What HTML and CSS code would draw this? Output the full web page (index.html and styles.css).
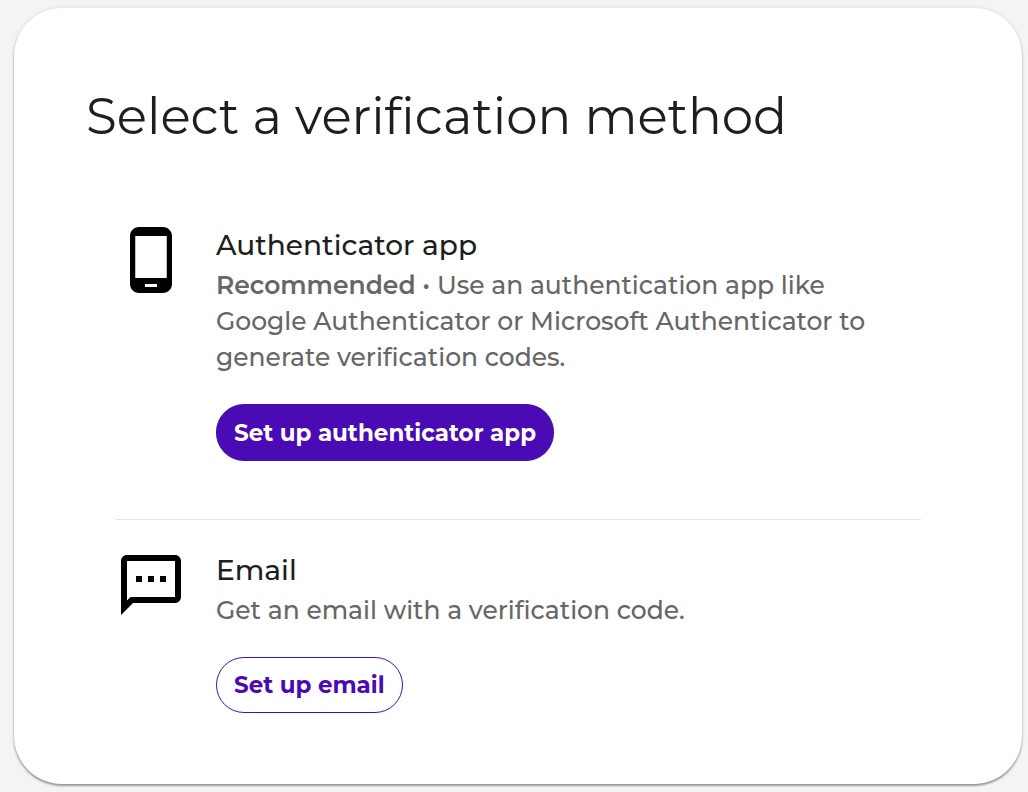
FILE: index.html
```html
<!DOCTYPE html>
<html lang="en">
<head>
<meta charset="utf-8">
<meta name="viewport" content="width=device-width, initial-scale=1">
<title>Select a verification method</title>
<link rel="stylesheet" href="styles.css">
</head>
<body>
<main class="card">
  <h1 class="title">Select a verification method</h1>
  <ul class="methods">
    <li class="method">
      <svg class="method-icon" viewBox="0 0 24 24" aria-hidden="true"><path d="M16 1H8C6.34 1 5 2.34 5 4v16c0 1.66 1.34 3 3 3h8c1.66 0 3-1.34 3-3V4c0-1.66-1.34-3-3-3zm-2 20h-4v-1h4v1zm3.25-3H6.75V4h10.5v14z"/></svg>
      <div class="method-body">
        <h2 class="method-name">Authenticator app</h2>
        <p class="method-text"><strong class="tag">Recommended</strong> • Use an authentication app like Google Authenticator or Microsoft Authenticator to generate verification codes.</p>
        <button class="button button-primary" type="button">Set up authenticator app</button>
      </div>
    </li>
    <li class="method">
      <svg class="method-icon" viewBox="0 0 24 24" aria-hidden="true"><path d="M20 2H4c-1.100 0-2 .9-2 2v18l4-4h14c1.100 0 2-.9 2-2V4c0-1.100-.9-2-2-2zm0 14H5.170L4 17.170V4h16v12zM7 9h2v2H7zm4 0h2v2h-2zm4 0h2v2h-2z"/></svg>
      <div class="method-body">
        <h2 class="method-name">Email</h2>
        <p class="method-text">Get an email with a verification code.</p>
        <button class="button button-outline" type="button">Set up email</button>
      </div>
    </li>
  </ul>
</main>
</body>
</html>
```
FILE: styles.css
```css
* {
  box-sizing: border-box;
}

body {
  margin: 0;
  padding: 8px 6px 8px 14px;
  background: #f4f4f4;
  color: #1e1e1e;
  font-family: Montserrat, Inter, "Open Sans", sans-serif;
}

.card {
  padding: 72px 72px 71px;
  border-radius: 48px;
  background: #fff;
  box-shadow: 0 2px 2px rgba(0, 0, 0, 0.35), 0 0 4px rgba(0, 0, 0, 0.1);
}

.title {
  margin: 0;
  font-size: 50px;
  font-weight: 400;
  line-height: 74px;
}

.methods {
  margin: 70px 29px 0;
  padding: 0;
  list-style: none;
}

.method {
  display: flex;
  gap: 29px;
}

.method + .method {
  margin-top: 58px;
  padding-top: 29px;
  border-top: 1px solid #e6e6e6;
}

.method-icon {
  flex: none;
  width: 72px;
  height: 72px;
}

.method-body {
  flex: 1;
  max-width: 676px;
}

.method-name {
  margin: 0;
  font-size: 28px;
  font-weight: 500;
  line-height: 43px;
}

.method-text {
  margin: 0 0 29px;
  color: #666;
  font-size: 25px;
  font-weight: 500;
  line-height: 36px;
}

.tag {
  font-weight: 600;
}

.button {
  height: 56px;
  padding: 0 17px;
  border: 1px solid #4a0bb5;
  border-radius: 28px;
  font: inherit;
  font-size: 23px;
  font-weight: 700;
  cursor: pointer;
}

.button-primary {
  height: 57px;
  background: #4a0bb5;
  color: #fff;
}

.button-outline {
  background: #fff;
  color: #4a0bb5;
}
```
